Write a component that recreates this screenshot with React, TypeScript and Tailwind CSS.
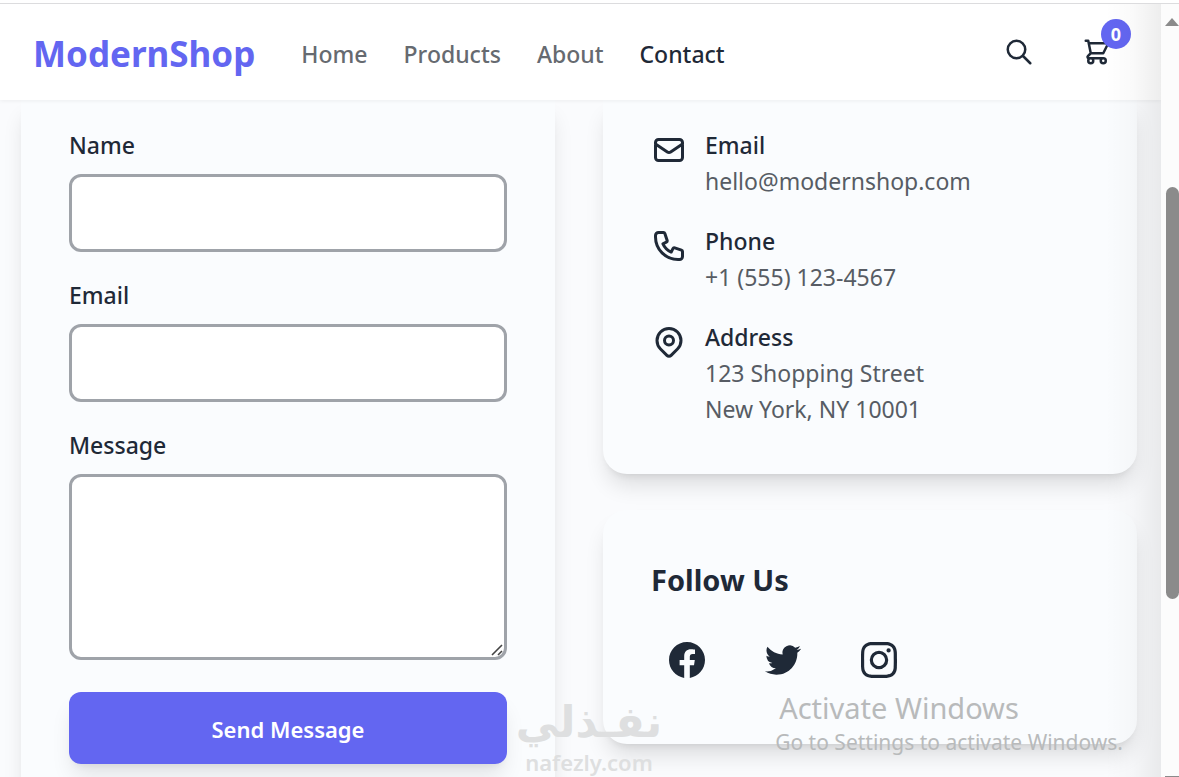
import React from "react";

type IconProps = { path: string; extra?: string; className: string };

function StrokeIcon({ path, extra, className }: IconProps) {
  return (
    <svg viewBox="0 0 24 24" fill="none" stroke="currentColor" strokeWidth={2} strokeLinecap="round" strokeLinejoin="round" className={className} aria-hidden="true">
      <path d={path} />
      {extra && <path d={extra} />}
    </svg>
  );
}

const paths = {
  search: "M21 21l-6-6m2-5a7 7 0 11-14 0 7 7 0 0114 0z",
  cart: "M3 3h2l.4 2M7 13h10l4-8H5.4M7 13L5.4 5M7 13l-2.293 2.293c-.63.63-.184 1.707.707 1.707H17m0 0a2 2 0 100 4 2 2 0 000-4zm-8 2a2 2 0 11-4 0 2 2 0 014 0z",
  mail: "M3 8l7.89 5.26a2 2 0 002.22 0L21 8M5 19h14a2 2 0 002-2V7a2 2 0 00-2-2H5a2 2 0 00-2 2v10a2 2 0 002 2z",
  phone: "M3 5a2 2 0 012-2h3.28a1 1 0 01.948.684l1.498 4.493a1 1 0 01-.502 1.21l-2.257 1.13a11.042 11.042 0 005.516 5.516l1.13-2.257a1 1 0 011.21-.502l4.493 1.498a1 1 0 01.684.949V19a2 2 0 01-2 2h-1C9.716 21 3 14.284 3 6V5z",
  pin: "M17.657 16.657L13.414 20.9a1.998 1.998 0 01-2.827 0l-4.244-4.243a8 8 0 1111.314 0z",
  pinDot: "M15 11a3 3 0 11-6 0 3 3 0 016 0z",
};

const navLinks = ["Home", "Products", "About", "Contact"];

const contacts = [
  { title: "Email", lines: ["hello@modernshop.com"], path: paths.mail },
  { title: "Phone", lines: ["+1 (555) 123-4567"], path: paths.phone },
  { title: "Address", lines: ["123 Shopping Street", "New York, NY 10001"], path: paths.pin, extra: paths.pinDot },
];

const socials = [
  {
    name: "Facebook",
    path: "M24 12.073c0-6.627-5.373-12-12-12s-12 5.373-12 12c0 5.99 4.388 10.954 10.125 11.854v-8.385H7.078v-3.47h3.047V9.43c0-3.007 1.792-4.669 4.533-4.669 1.312 0 2.686.235 2.686.235v2.953H15.83c-1.491 0-1.956.925-1.956 1.874v2.25h3.328l-.532 3.47h-2.796v8.385C19.612 23.027 24 18.062 24 12.073z",
  },
  {
    name: "Twitter",
    path: "M23.953 4.57a10 10 0 01-2.825.775 4.958 4.958 0 002.163-2.723c-.951.555-2.005.959-3.127 1.184a4.92 4.92 0 00-8.384 4.482C7.69 8.095 4.067 6.13 1.64 3.162a4.822 4.822 0 00-.666 2.475c0 1.71.87 3.213 2.188 4.096a4.904 4.904 0 01-2.228-.616v.06a4.923 4.923 0 003.946 4.827 4.996 4.996 0 01-2.212.085 4.936 4.936 0 004.604 3.417 9.867 9.867 0 01-6.102 2.105c-.39 0-.779-.023-1.17-.067a13.995 13.995 0 007.557 2.209c9.053 0 13.998-7.496 13.998-13.985 0-.21 0-.42-.015-.63A9.935 9.935 0 0024 4.59z",
  },
  {
    name: "Instagram",
    path: "M12 0C8.74 0 8.333.015 7.053.072 5.775.132 4.905.333 4.14.63c-.789.306-1.459.717-2.126 1.384S.935 3.35.63 4.14C.333 4.905.131 5.775.072 7.053.012 8.333 0 8.74 0 12s.015 3.667.072 4.947c.06 1.277.261 2.148.558 2.913.306.788.717 1.459 1.384 2.126.667.666 1.336 1.079 2.126 1.384.766.296 1.636.499 2.913.558C8.333 23.988 8.74 24 12 24s3.667-.015 4.947-.072c1.277-.06 2.148-.262 2.913-.558.788-.306 1.459-.718 2.126-1.384.666-.667 1.079-1.335 1.384-2.126.296-.765.499-1.636.558-2.913.06-1.28.072-1.687.072-4.947s-.015-3.667-.072-4.947c-.06-1.277-.262-2.149-.558-2.913-.306-.789-.718-1.459-1.384-2.126C21.319 1.347 20.651.935 19.86.63c-.765-.297-1.636-.499-2.913-.558C15.667.012 15.26 0 12 0zm0 2.16c3.203 0 3.585.016 4.85.071 1.17.055 1.805.249 2.227.415.562.217.96.477 1.382.896.419.42.679.819.896 1.381.164.422.36 1.057.413 2.227.057 1.266.07 1.646.07 4.85s-.015 3.585-.074 4.85c-.061 1.17-.256 1.805-.421 2.227-.224.562-.479.96-.899 1.382-.419.419-.824.679-1.38.896-.42.164-1.065.36-2.235.413-1.274.057-1.649.07-4.859.07-3.211 0-3.586-.015-4.859-.074-1.171-.061-1.816-.256-2.236-.421-.569-.224-.96-.479-1.379-.899-.421-.419-.69-.824-.9-1.38-.165-.42-.359-1.065-.42-2.235-.045-1.26-.061-1.649-.061-4.844 0-3.196.016-3.586.061-4.861.061-1.17.255-1.814.42-2.234.21-.57.479-.96.9-1.381.419-.419.81-.689 1.379-.898.42-.166 1.051-.361 2.221-.421 1.275-.045 1.65-.06 4.859-.06l.045.03zm0 3.678a6.162 6.162 0 100 12.324 6.162 6.162 0 100-12.324zM12 16c-2.21 0-4-1.79-4-4s1.79-4 4-4 4 1.79 4 4-1.79 4-4 4zm7.846-10.405a1.441 1.441 0 01-2.88 0 1.44 1.44 0 012.88 0z",
  },
];

const card = "bg-[#fafcfe] shadow-[0_15px_22px_-4px_rgba(0,0,0,0.12),0_6px_9px_-6px_rgba(0,0,0,0.12)]";
const field = "block w-full rounded-xl border-3 border-[#9fa3a9] bg-white px-4 text-[23px] outline-none focus:border-[#6366f1]";

function Header() {
  return (
    <header className="relative z-10 flex h-24 shrink-0 items-center bg-white pt-1 pr-8 pl-[33px] shadow-[0_1px_4px_rgba(0,0,0,0.06)]">
      <a href="#" className="text-[35px] font-bold text-[#6366f1]">ModernShop</a>
      <nav className="ml-[46px] flex gap-9 text-[23px] font-medium">
        {navLinks.map((label) => (
          <a key={label} href="#" className={label === "Contact" ? "text-[#1f2937]" : "text-[#666a70]"}>
            {label}
          </a>
        ))}
      </nav>
      <div className="ml-auto flex gap-[14px] pb-1 text-[#1f2937]">
        <button type="button" aria-label="Search" className="flex size-16 items-center justify-center">
          <StrokeIcon path={paths.search} className="size-[30px]" />
        </button>
        <button type="button" aria-label="Cart" className="relative flex size-16 items-center justify-center">
          <StrokeIcon path={paths.cart} className="size-[30px]" />
          <span className="absolute -top-px -right-0.5 flex size-[30px] items-center justify-center rounded-full bg-[#6366f1] text-lg font-bold text-white">0</span>
        </button>
      </div>
    </header>
  );
}

function ContactForm() {
  return (
    <form className={`${card} rounded-b-3xl px-12 pt-[27px] pb-12`} onSubmit={(e) => e.preventDefault()}>
      <div className="flex flex-col gap-[25px] text-[23px] leading-9">
        <div>
          <label htmlFor="name" className="mb-[11px] block font-medium">Name</label>
          <input id="name" type="text" className={`${field} h-[78px]`} />
        </div>
        <div>
          <label htmlFor="email" className="mb-[11px] block font-medium">Email</label>
          <input id="email" type="email" className={`${field} h-[78px]`} />
        </div>
        <div>
          <label htmlFor="message" className="mb-[11px] block font-medium">Message</label>
          <div className="relative">
            <textarea id="message" className={`${field} h-[186px] resize-none`} />
            <svg viewBox="0 0 12 12" className="absolute right-1 bottom-1 size-3" stroke="#444" strokeWidth="1.6" aria-hidden="true">
              <path d="M1 11L11 1M7 11L11 7" />
            </svg>
          </div>
        </div>
      </div>
      <button type="submit" className="mt-8 h-[72px] w-full rounded-xl bg-[#6366f1] pt-0.5 text-[22px] font-semibold text-white shadow-[0_15px_22px_-4px_rgba(0,0,0,0.1),0_6px_9px_-6px_rgba(0,0,0,0.1)]">
        Send Message
      </button>
    </form>
  );
}

function ContactInfo() {
  return (
    <section className={`${card} flex flex-col gap-6 rounded-b-3xl px-12 pt-[27px] pb-[47px]`}>
      {contacts.map((c) => (
        <div key={c.title} className="flex gap-[18px]">
          <StrokeIcon path={c.path} extra={c.extra} className="mt-[5px] size-9 shrink-0" />
          <div className="text-[23px] leading-9">
            <h3 className="font-medium">{c.title}</h3>
            {c.lines.map((line) => (
              <p key={line} className="text-[#575c64]">{line}</p>
            ))}
          </div>
        </div>
      ))}
    </section>
  );
}

function FollowUs() {
  return (
    <section className={`${card} rounded-3xl px-12 pt-[49px] pb-12`}>
      <h2 className="mb-[23px] text-[29px] leading-[42px] font-bold">Follow Us</h2>
      <div className="flex gap-6">
        {socials.map((s) => (
          <a key={s.name} href="#" aria-label={s.name} className="flex size-[72px] items-center justify-center">
            <svg viewBox="0 0 24 24" fill="currentColor" className="size-9" aria-hidden="true">
              <path d={s.path} />
            </svg>
          </a>
        ))}
      </div>
    </section>
  );
}

export default function App() {
  return (
    <div className="flex h-screen flex-col overflow-hidden bg-white font-['Noto_Sans','Open_Sans',sans-serif] text-[#1f2937]">
      <div className="h-1 shrink-0 border-b border-[#dcdcde]" />
      <div className="relative flex min-h-0 flex-1">
        <div className="relative flex min-w-0 flex-1 flex-col overflow-hidden bg-[#fafbfd]">
          <Header />
          <main className="grid grid-cols-2 items-start gap-12 pr-6 pl-[21px]">
            <ContactForm />
            <div className="flex flex-col gap-9">
              <ContactInfo />
              <FollowUs />
            </div>
          </main>
          <div className="pointer-events-none absolute inset-y-0 right-0 z-20 w-14 bg-linear-to-r from-transparent via-black/2 to-black/7" />
        </div>
        <div className="flex w-[18px] shrink-0 flex-col items-end bg-[#fcfcfc]">
          <svg viewBox="0 0 14 8" className="mt-3.5 h-2 w-3.5" fill="#8b8b8b" aria-hidden="true">
            <path d="M7 0L14 8H0Z" />
          </svg>
          <div className="mt-[161px] h-[412px] w-[13px] rounded-full bg-[#8b8b8b]" />
          <div className="mt-auto h-px w-3.5 bg-[#8b8b8b]" />
        </div>
        <div className="pointer-events-none absolute right-14 bottom-[19px] z-30 text-[#b8babb]">
          <p className="pl-1 text-[29px] leading-9">Activate Windows</p>
          <p className="text-[21px] leading-8">Go to Settings to activate Windows.</p>
        </div>
        <div className="pointer-events-none absolute bottom-0 left-[518px] z-30 flex w-[142px] flex-col items-center font-bold text-[#dedfe0]">
          <span lang="ar" dir="rtl" className="font-['DejaVu_Sans',sans-serif] text-[43px] leading-[50px]">نفـذلي</span>
          <span className="text-[22px] leading-[30px] font-semibold">nafezly.com</span>
        </div>
      </div>
    </div>
  );
}
